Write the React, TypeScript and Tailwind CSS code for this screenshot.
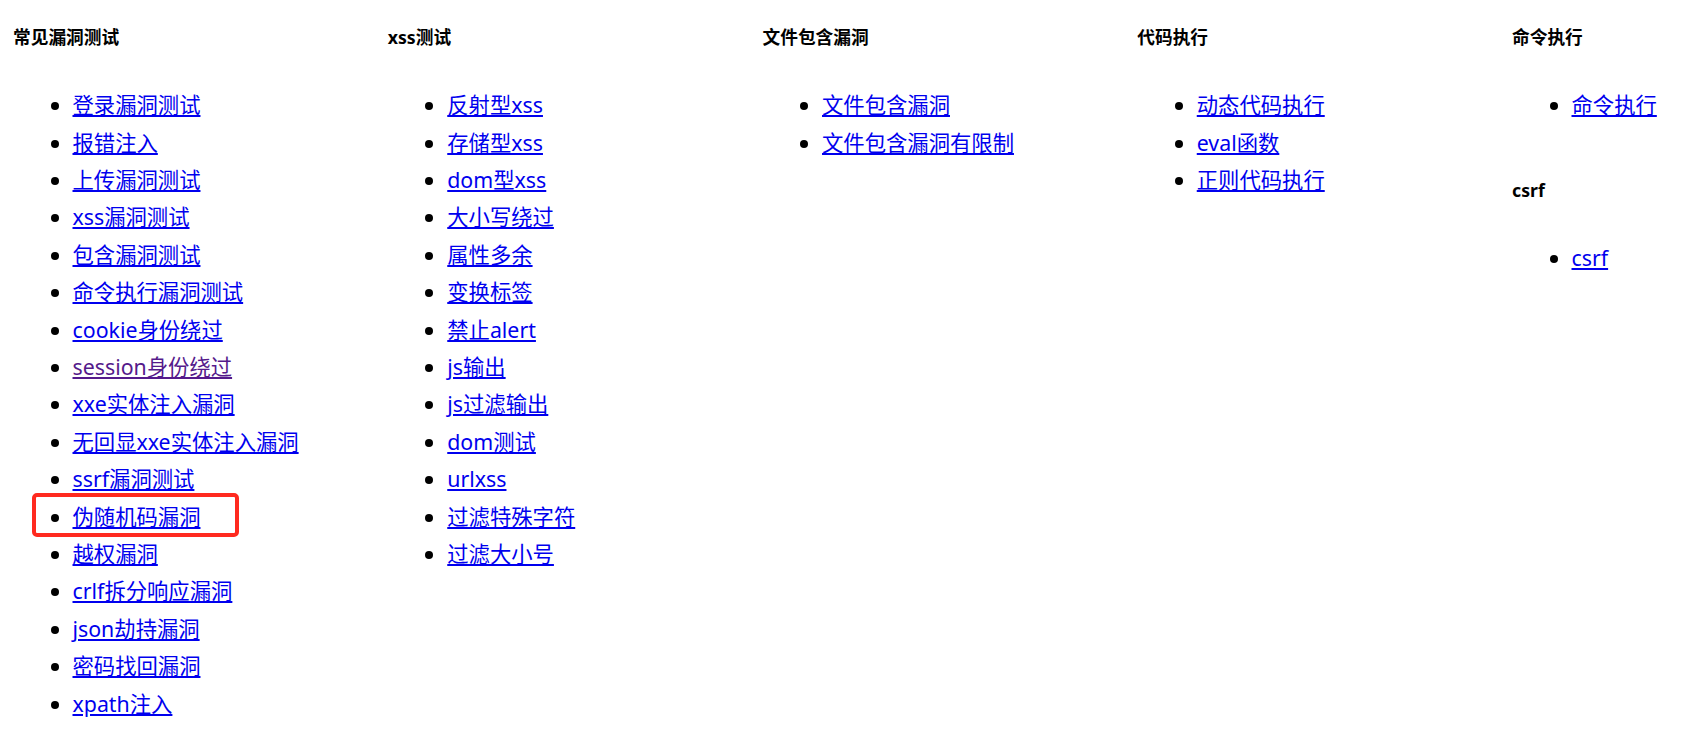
import React from 'react';

type Item = { label: string; visited?: boolean; marked?: boolean };
type Section = { title: string; items: Item[] };

const columns: Section[][] = [
  [
    {
      title: '常见漏洞测试',
      items: [
        { label: '登录漏洞测试' },
        { label: '报错注入' },
        { label: '上传漏洞测试' },
        { label: 'xss漏洞测试' },
        { label: '包含漏洞测试' },
        { label: '命令执行漏洞测试' },
        { label: 'cookie身份绕过' },
        { label: 'session身份绕过', visited: true },
        { label: 'xxe实体注入漏洞' },
        { label: '无回显xxe实体注入漏洞' },
        { label: 'ssrf漏洞测试' },
        { label: '伪随机码漏洞', marked: true },
        { label: '越权漏洞' },
        { label: 'crlf拆分响应漏洞' },
        { label: 'json劫持漏洞' },
        { label: '密码找回漏洞' },
        { label: 'xpath注入' },
      ],
    },
  ],
  [
    {
      title: 'xss测试',
      items: [
        { label: '反射型xss' },
        { label: '存储型xss' },
        { label: 'dom型xss' },
        { label: '大小写绕过' },
        { label: '属性多余' },
        { label: '变换标签' },
        { label: '禁止alert' },
        { label: 'js输出' },
        { label: 'js过滤输出' },
        { label: 'dom测试' },
        { label: 'urlxss' },
        { label: '过滤特殊字符' },
        { label: '过滤大小号' },
      ],
    },
  ],
  [
    {
      title: '文件包含漏洞',
      items: [{ label: '文件包含漏洞' }, { label: '文件包含漏洞有限制' }],
    },
  ],
  [
    {
      title: '代码执行',
      items: [{ label: '动态代码执行' }, { label: 'eval函数' }, { label: '正则代码执行' }],
    },
  ],
  [
    { title: '命令执行', items: [{ label: '命令执行' }] },
    { title: 'csrf', items: [{ label: 'csrf' }] },
  ],
];

const Block: React.FC<{ section: Section }> = ({ section }) => (
  <div>
    <h5 className="text-[17.7px] leading-[24px] font-bold text-black">{section.title}</h5>
    <ul className="list-disc pl-[59.5px] mt-[37.6px] mb-[54px]">
      {section.items.map((item) => (
        <li key={item.label} className="relative text-[21.33px] leading-[37.4px] text-black">
          <a
            href="#"
            className={item.visited ? 'text-[#551a8b] underline' : 'text-[#0000ee] underline'}
          >
            {item.label}
          </a>
          {item.marked && (
            <span className="absolute left-[-41px] top-[-5px] w-[207px] h-[44.6px] rounded-[5px] border-[4px] border-[#ff2a1f] pointer-events-none" />
          )}
        </li>
      ))}
    </ul>
  </div>
);

export default function App() {
  return (
    <div
      className="flex w-full h-[730px] bg-white pl-[13px] pt-[24.5px] overflow-hidden"
      style={{ fontFamily: '"Noto Sans", "Noto Sans CJK SC", sans-serif' }}
    >
      {columns.map((col, i) => (
        <div key={i} className={i === columns.length - 1 ? 'flex-1 min-w-0' : 'w-[374.75px] shrink-0'}>
          {col.map((section) => (
            <Block key={section.title} section={section} />
          ))}
        </div>
      ))}
    </div>
  );
}
